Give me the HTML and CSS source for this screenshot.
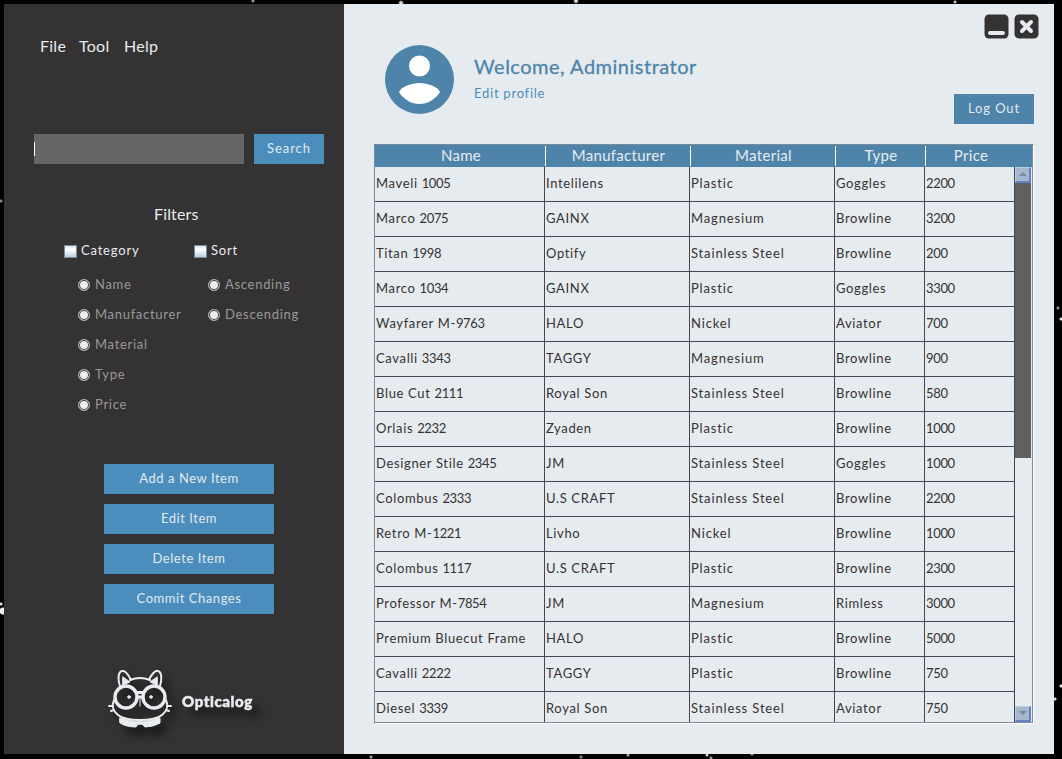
FILE: index.html
```html
<!DOCTYPE html>
<html lang="en">
<head>
<meta charset="utf-8">
<title>Opticalog</title>
<link rel="stylesheet" href="styles.css">
</head>
<body>
<div class="window">
  <aside class="sidebar">
    <nav class="menu"><span class="m-file">File</span><span class="m-tool">Tool</span><span class="m-help">Help</span></nav>
    <div class="search"><div class="field"><i class="caret"></i></div><button class="btn bright">Search</button></div>
    <h2 class="filters-title">Filters</h2>
    <div class="filters">
      <div class="group">
        <label class="check"><i class="box"></i>Category</label>
        <label class="radio"><i class="dot"></i>Name</label>
        <label class="radio"><i class="dot"></i>Manufacturer</label>
        <label class="radio"><i class="dot"></i>Material</label>
        <label class="radio"><i class="dot"></i>Type</label>
        <label class="radio"><i class="dot"></i>Price</label>
      </div>
      <div class="group">
        <label class="check"><i class="box"></i>Sort</label>
        <label class="radio"><i class="dot"></i>Ascending</label>
        <label class="radio"><i class="dot"></i>Descending</label>
      </div>
    </div>
    <div class="actions">
      <button class="btn bright">Add a New Item</button>
      <button class="btn bright">Edit Item</button>
      <button class="btn bright">Delete Item</button>
      <button class="btn bright">Commit Changes</button>
    </div>
    <div class="brand">
      <svg class="cat" width="64" height="60" viewBox="0 0 64 60" fill="none" stroke="#e8ecf0" stroke-width="2" stroke-linecap="round">
        <path d="M12 17C9 8 11 1 15 2C18 2 21 7 23 11M22 11Q32 7 42 11M41 11C43 6 47 1 50 2C54 3 54 11 52 17"/>
        <path d="M15 8L22 13L15 16ZM49 8L42 13L49 16Z" fill="#e8ecf0" stroke-width="1"/>
        <circle cx="18" cy="28" r="11" stroke-width="3.4"/>
        <circle cx="46" cy="28" r="11" stroke-width="3.4"/>
        <path d="M28 23.500h8M29 28h6" stroke-width="3" stroke-linecap="butt"/>
        <path d="M32 28v9" stroke-width="1"/>
        <circle cx="21" cy="28" r="1.300" fill="#e8ecf0" stroke-width="1"/>
        <circle cx="43" cy="28" r="1.300" fill="#e8ecf0" stroke-width="1"/>
        <path d="M6 31C3 38 5 42 10 46Q16 51 32 51Q48 51 54 46C59 42 61 38 58 31"/>
        <path d="M1 37h4M3 42l3-1M63 37h-4M61 42l-3-1"/>
        <path d="M12 49Q32 56 52 49V54Q45 58 37 58Q35 55 32 55Q29 55 28 58Q18 58 12 54Z" fill="#e8ecf0" stroke-width="1"/>
      </svg>
      <span class="brand-name">Opticalog</span>
    </div>
  </aside>
  <main class="main">
    <header class="top">
      <svg class="avatar" width="70" height="70" viewBox="0 0 70 70"><circle cx="35.500" cy="35.500" r="34.500" fill="#4e84aa"/><circle cx="35.500" cy="22" r="10.500" fill="#fff"/><path d="M15 48C17.500 42.500 27.500 39 35.500 39S53.500 42.500 56 48C51.500 55.500 43.500 60 35.500 60S19.500 55.500 15 48Z" fill="#fff"/></svg>
      <div class="welcome"><h1>Welcome, Administrator</h1><a>Edit profile</a></div>
      <div class="right">
        <div class="controls">
          <svg width="25" height="25" viewBox="0 0 25 25"><rect x=".5" y=".5" width="24" height="24" rx="4.500" fill="#353233"/><path d="M6 19h13" stroke="#e6ebef" stroke-width="4" stroke-linecap="round"/></svg>
          <svg width="25" height="25" viewBox="0 0 25 25"><rect x=".5" y=".5" width="24" height="24" rx="4.500" fill="#353233"/><path d="M8 8l9 9M17 8l-9 9" stroke="#e6ebef" stroke-width="4" stroke-linecap="round"/></svg>
        </div>
        <button class="btn logout">Log Out</button>
      </div>
    </header>
    <section class="pane">
      <div class="thead"><span>Name</span><span>Manufacturer</span><span>Material</span><span>Type</span><span>Price</span></div>
      <div class="body">
        <div class="rows">
          <div class="row"><span>Maveli <b>1005</b></span><span>Intelilens</span><span>Plastic</span><span>Goggles</span><span>2200</span></div>
          <div class="row"><span>Marco <b>2075</b></span><span>GAINX</span><span>Magnesium</span><span>Browline</span><span>3200</span></div>
          <div class="row"><span>Titan <b>1998</b></span><span>Optify</span><span>Stainless Steel</span><span>Browline</span><span>200</span></div>
          <div class="row"><span>Marco <b>1034</b></span><span>GAINX</span><span>Plastic</span><span>Goggles</span><span>3300</span></div>
          <div class="row"><span>Wayfarer M-<b>9763</b></span><span>HALO</span><span>Nickel</span><span>Aviator</span><span>700</span></div>
          <div class="row"><span>Cavalli <b>3343</b></span><span>TAGGY</span><span>Magnesium</span><span>Browline</span><span>900</span></div>
          <div class="row"><span>Blue Cut <b>2111</b></span><span>Royal Son</span><span>Stainless Steel</span><span>Browline</span><span>580</span></div>
          <div class="row"><span>Orlais <b>2232</b></span><span>Zyaden</span><span>Plastic</span><span>Browline</span><span>1000</span></div>
          <div class="row"><span>Designer Stile <b>2345</b></span><span>JM</span><span>Stainless Steel</span><span>Goggles</span><span>1000</span></div>
          <div class="row"><span>Colombus <b>2333</b></span><span>U.S CRAFT</span><span>Stainless Steel</span><span>Browline</span><span>2200</span></div>
          <div class="row"><span>Retro M-<b>1221</b></span><span>Livho</span><span>Nickel</span><span>Browline</span><span>1000</span></div>
          <div class="row"><span>Colombus <b>1117</b></span><span>U.S CRAFT</span><span>Plastic</span><span>Browline</span><span>2300</span></div>
          <div class="row"><span>Professor M-<b>7854</b></span><span>JM</span><span>Magnesium</span><span>Rimless</span><span>3000</span></div>
          <div class="row"><span>Premium Bluecut Frame</span><span>HALO</span><span>Plastic</span><span>Browline</span><span>5000</span></div>
          <div class="row"><span>Cavalli <b>2222</b></span><span>TAGGY</span><span>Plastic</span><span>Browline</span><span>750</span></div>
          <div class="row"><span>Diesel <b>3339</b></span><span>Royal Son</span><span>Stainless Steel</span><span>Aviator</span><span>750</span></div>
        </div>
        <div class="scroll"><i class="arrow up"></i><i class="thumb"></i><i class="arrow down"></i></div>
      </div>
    </section>
  </main>
</div>
</body>
</html>
```
FILE: styles.css
```css
* { box-sizing: border-box; }
body {
  margin: 0; padding: 4px 8px 5px 4px; height: 759px; overflow: hidden;
  font: 13px/18px Lato, sans-serif; letter-spacing: .65px; color: #353233;
  background:
    radial-gradient(circle at 1px 604px, #ddd 1px, transparent 2px),
    radial-gradient(circle at 3px 611px, #eee 3px, transparent 4px),
    radial-gradient(circle at 1px 201px, #888 1px, transparent 2px),
    radial-gradient(circle at 253px 1px, #999 1px, transparent 2px),
    radial-gradient(circle at 401px 3px, #ddd 1px, transparent 3px),
    radial-gradient(circle at 576px 1px, #ddd 1px, transparent 3px),
    radial-gradient(circle at 955px 2px, #bbb 1px, transparent 2px),
    radial-gradient(circle at 1058px 308px, #888 1px, transparent 2px),
    radial-gradient(circle at 1061px 319px, #ddd 1px, transparent 2px),
    radial-gradient(circle at 1055px 699px, #ddd 1px, transparent 2px),
    radial-gradient(circle at 1061px 686px, #ddd 1px, transparent 2px),
    radial-gradient(circle at 371px 757px, #999 1px, transparent 2px),
    radial-gradient(circle at 581px 757px, #888 1px, transparent 2px),
    radial-gradient(circle at 628px 755px, #999 1px, transparent 2px),
    radial-gradient(circle at 707px 755px, #ccc 1px, transparent 2px),
    radial-gradient(circle at 711px 758px, #999 1px, transparent 2px),
    radial-gradient(circle at 752px 754px, #999 1px, transparent 2px),
    #000;
}
.window { display: flex; height: 750px; width: 1050px; }
.sidebar { width: 340px; background: #353233; color: #e8ecf0; }
.menu { display: flex; padding: 32px 0 0 36px; font-size: 16px; line-height: 20px; letter-spacing: .25px; }
.m-file { width: 39px; } .m-tool { width: 45px; }
.search { display: flex; gap: 10px; margin: 78px 0 0 30px; }
.field { width: 210px; height: 30px; background: #666; padding-top: 8px; }
.caret { display: block; width: 1px; height: 14px; background: #fff; }
.btn { border: 0; padding: 0 0 2px; height: 30px; font: inherit; letter-spacing: .55px; color: #e1e9ee; background: #4e84aa; text-align: center; }
.bright { background: #4b8ebd; }
.search .btn { width: 70px; letter-spacing: .95px; }
.filters-title { margin: 40px 0 0 150px; font-size: 16px; font-weight: 400; line-height: 20px; letter-spacing: .15px; }
.filters { display: flex; padding: 16px 0 0 60px; height: 240px; }
.group { width: 130px; }
.check, .radio { display: flex; align-items: center; height: 20px; }
.check { letter-spacing: .8px; }
.box { width: 13px; height: 13px; margin: 2px 4px 0 0; border: 1px solid #7a8a99; background: linear-gradient(#dde8f3, #fff 35%, #b8cfe5); }
.radio { color: #999; margin: 10px 0 0 14px; letter-spacing: .7px; }
.check + .radio { margin-top: 14px; }
.dot { width: 12px; height: 12px; margin: 1px 5px 0 0; border-radius: 50%; border: 1px solid #aaa; background: #eee; box-shadow: inset 0 0 0 1px #353233; }
.actions { display: grid; gap: 10px; width: 170px; margin-left: 100px; }
.brand { display: flex; align-items: center; padding: 55px 0 0 104px; filter: drop-shadow(6px 7px 5px rgba(0,0,0,.65)); }
.brand-name { margin: 3px 0 0 10px; font: 900 15px/20px Lato, sans-serif; letter-spacing: .6px; -webkit-text-stroke: .5px #e8ecf0; }
.main { width: 710px; background: #e6ebef; padding: 10px 20px 0 30px; }
.top { display: flex; height: 130px; }
.avatar { margin: 30px 0 0 10px; }
.welcome { margin: 40px 0 0 20px; flex: 1; }
h1 { margin: 0; font-size: 20px; line-height: 24px; font-weight: 400; letter-spacing: .5px; color: #4e84aa; -webkit-text-stroke: .3px #4e84aa; }
.welcome a { display: block; margin-top: 6px; letter-spacing: .75px; color: #4b8ebd; }
.right { width: 80px; }
.controls { display: flex; gap: 5px; margin-left: 30px; height: 80px; }
.controls svg { flex: none; }
.logout { display: block; width: 80px; letter-spacing: .9px; }
.pane { width: 660px; height: 580px; border: 1px solid #7a8a99; border-right-color: #fff; border-bottom-color: #fff; }
.thead { display: flex; height: 22px; background: #4e84aa; color: #e6ebef; font-size: 15px; line-height: 20px; letter-spacing: .3px; text-align: center; border-right: 1px solid #7a8a99; }
.thead span { width: 145px; padding-left: 2px; background: linear-gradient(#fff, #fff) 0 1px / 1px 20px no-repeat; }
.thead span:first-child { width: 170px; background: none; }
.thead span:nth-child(4), .thead span:nth-child(5) { width: 90px; }
.body { display: flex; height: 556px; border-right: 1px solid #7a8a99; border-bottom: 1px solid #7a8a99; overflow: hidden; }
.rows { width: 640px; height: 555px; overflow: hidden; }
.row { display: flex; height: 35px; line-height: 32px; border-bottom: 1px solid #424658; }
.row span { width: 145px; padding-left: 1px; border-right: 1px solid #424658; white-space: nowrap; }
.row b { font-weight: 400; letter-spacing: -.35px; }
.row span:first-child { width: 170px; }
.row span:nth-child(3) { letter-spacing: .85px; }
.row span:nth-child(4), .row span:nth-child(5) { width: 90px; }
.row span:nth-child(5) { letter-spacing: -.35px; }
.scroll { display: flex; flex-direction: column; width: 16px; height: 555px; }
.arrow { height: 16px; flex: none; background: #a3b8cc; border: 1px solid #b8cfe5; border-right: 2px solid #6382bf; border-bottom: 2px solid #6382bf; padding: 4px 3px; }
.arrow::before { content: ""; display: block; width: 8px; height: 4px; background: #7a8a99; clip-path: polygon(50% 0, 100% 100%, 0 100%); }
.down { margin-top: auto; }
.down::before { transform: rotate(180deg); }
.thumb { height: 275px; background: #606060; }
```
